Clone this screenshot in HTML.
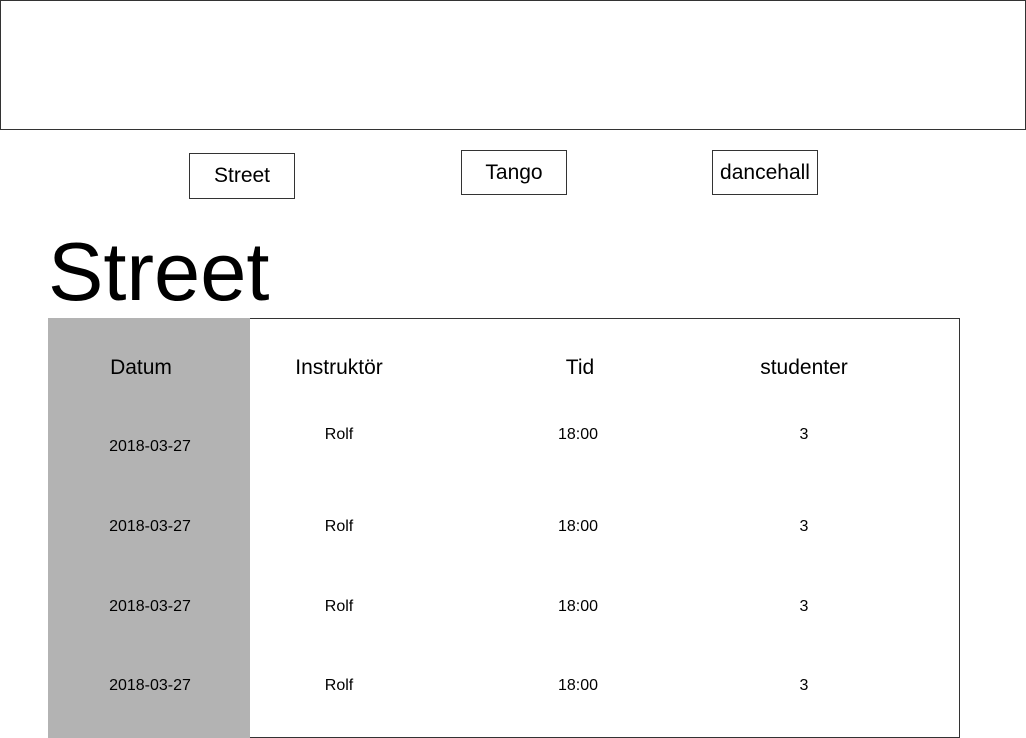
<!DOCTYPE html>
<html><head><meta charset="utf-8"><style>
body{margin:0;width:1026px;height:738px;background:#fff;position:relative;overflow:hidden;font-family:"Liberation Sans",sans-serif;color:#000}
.a{position:absolute}
.box{position:absolute;border:1px solid #333;box-sizing:border-box}
.btn{position:absolute;border:1px solid #333;box-sizing:border-box;display:flex;align-items:center;justify-content:center;font-size:21px}
.c{position:absolute;transform:translate(-50%,-50%);white-space:nowrap}
.h{font-size:21px}
.d{font-size:16px}
</style></head><body>
<div class="box" style="left:0;top:0;width:1026px;height:130px"></div>
<div class="btn" style="left:189px;top:153px;width:106px;height:46px">Street</div>
<div class="btn" style="left:461px;top:150px;width:106px;height:45px">Tango</div>
<div class="btn" style="left:712px;top:150px;width:106px;height:45px">dancehall</div>
<div class="a" style="left:48px;top:222px;font-size:83px;line-height:100px">Street</div>
<div class="box" style="left:48px;top:318px;width:912px;height:420px"></div>
<div class="a" style="left:48px;top:318px;width:202px;height:420px;background:#b3b3b3"></div>
<div class="c h" style="left:141px;top:368px">Datum</div>
<div class="c h" style="left:339px;top:368px">Instruktör</div>
<div class="c h" style="left:580px;top:368px">Tid</div>
<div class="c h" style="left:804px;top:368px">studenter</div>
<div class="c d" style="left:150px;top:447px">2018-03-27</div>
<div class="c d" style="left:339px;top:435px">Rolf</div>
<div class="c d" style="left:578px;top:435px">18:00</div>
<div class="c d" style="left:804px;top:435px">3</div>
<div class="c d" style="left:150px;top:527px">2018-03-27</div>
<div class="c d" style="left:339px;top:527px">Rolf</div>
<div class="c d" style="left:578px;top:527px">18:00</div>
<div class="c d" style="left:804px;top:527px">3</div>
<div class="c d" style="left:150px;top:607px">2018-03-27</div>
<div class="c d" style="left:339px;top:607px">Rolf</div>
<div class="c d" style="left:578px;top:607px">18:00</div>
<div class="c d" style="left:804px;top:607px">3</div>
<div class="c d" style="left:150px;top:686px">2018-03-27</div>
<div class="c d" style="left:339px;top:686px">Rolf</div>
<div class="c d" style="left:578px;top:686px">18:00</div>
<div class="c d" style="left:804px;top:686px">3</div>
</body></html>
